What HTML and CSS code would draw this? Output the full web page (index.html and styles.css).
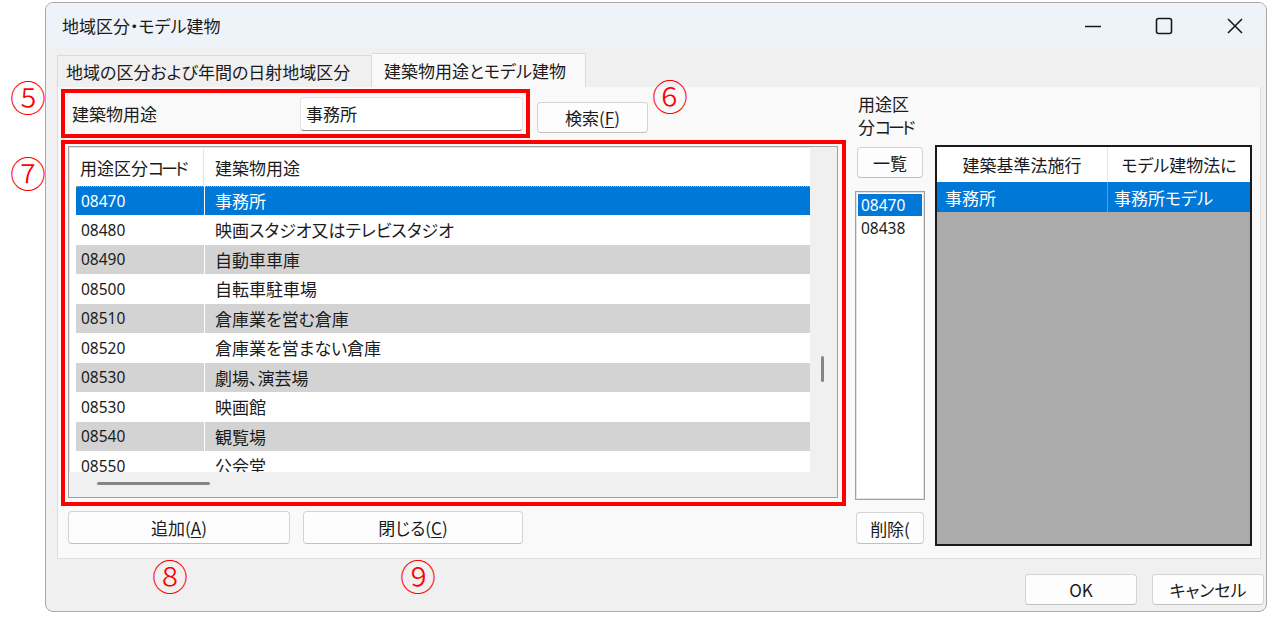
FILE: index.html
```html
<!DOCTYPE html>
<html lang="ja">
<head>
  <meta charset="UTF-8">
  <title>地域区分・モデル建物</title>
  <link rel="stylesheet" href="styles.css">
</head>
<body>
  <div class="window">
    <div class="titlebar">
      <span class="title">地域区分・モデル建物</span>
      <div class="controls">
        <span class="ctl">
          <svg width="18" height="18" viewBox="0 0 18 18"><path d="M1 9.5h16" stroke="#1a1a1a" stroke-width="1.6"/></svg>
        </span>
        <span class="ctl">
          <svg width="18" height="18" viewBox="0 0 18 18"><rect x="1.5" y="1.5" width="15" height="15" rx="2" fill="none" stroke="#1a1a1a" stroke-width="1.6"/></svg>
        </span>
        <span class="ctl">
          <svg width="18" height="18" viewBox="0 0 18 18"><path d="M2 2l14 14M16 2L2 16" stroke="#1a1a1a" stroke-width="1.6"/></svg>
        </span>
      </div>
    </div>

    <div class="tabs">
      <div class="tab">地域の区分および年間の日射地域区分</div>
      <div class="tab active">建築物用途とモデル建物</div>
    </div>

    <div class="panel">
      <div class="main">
        <div class="search-row">
          <div class="redbox box-search">
            <span class="label">建築物用途</span>
            <div class="input">事務所</div>
          </div>
          <button class="btn btn-search">検索(<u>F</u>)</button>
        </div>

        <div class="redbox box-list">
          <div class="listview">
            <div class="lv-body">
              <div class="lv-rows">
                <div class="lv-head">
                  <div class="c1">用途区分<span class="narrow">コード</span></div>
                  <div class="c2">建築物用途</div>
                </div>
                <div class="row sel"><div class="c1 code">08470</div><div class="c2">事務所</div></div>
                <div class="row"><div class="c1 code">08480</div><div class="c2">映画スタジオ又はテレビスタジオ</div></div>
                <div class="row alt"><div class="c1 code">08490</div><div class="c2">自動車車庫</div></div>
                <div class="row"><div class="c1 code">08500</div><div class="c2">自転車駐車場</div></div>
                <div class="row alt"><div class="c1 code">08510</div><div class="c2">倉庫業を営む倉庫</div></div>
                <div class="row"><div class="c1 code">08520</div><div class="c2">倉庫業を営まない倉庫</div></div>
                <div class="row alt"><div class="c1 code">08530</div><div class="c2">劇場、演芸場</div></div>
                <div class="row"><div class="c1 code">08530</div><div class="c2">映画館</div></div>
                <div class="row alt"><div class="c1 code">08540</div><div class="c2">観覧場</div></div>
                <div class="row"><div class="c1 code">08550</div><div class="c2">公会堂</div></div>
              </div>
              <div class="vscroll"><span class="vthumb"></span></div>
            </div>
            <div class="hscroll"><span class="hthumb"></span></div>
          </div>
        </div>

        <div class="btn-row">
          <button class="btn btn-wide">追加(<u>A</u>)</button>
          <button class="btn btn-wide">閉じる(<u>C</u>)</button>
        </div>
      </div>

      <div class="codes">
        <div class="codes-label">用途区<br>分<span class="narrow">コード</span></div>
        <button class="btn btn-list">一覧</button>
        <div class="listbox">
          <div class="lb-item sel">08470</div>
          <div class="lb-item">08438</div>
        </div>
        <button class="btn btn-del">削除(</button>
      </div>

      <div class="grid">
        <div class="grid-head">
          <div class="g1">建築基準法施行</div>
          <div class="g2">モデル建物法に</div>
        </div>
        <div class="grid-row">
          <div class="g1">事務所</div>
          <div class="g2">事務所モデル</div>
        </div>
      </div>
    </div>

    <div class="footer">
      <button class="btn btn-foot">OK</button>
      <button class="btn btn-foot">キャンセル</button>
    </div>
  </div>

  <span class="mark m5">⑤</span>
  <span class="mark m6">⑥</span>
  <span class="mark m7">⑦</span>
  <span class="mark m8">⑧</span>
  <span class="mark m9">⑨</span>
</body>
</html>
```

FILE: styles.css
```css
body {
  margin: 0;
  background: #fff;
  position: relative;
  font-family: "Noto Sans CJK JP", sans-serif;
  font-feature-settings: "palt";
  font-size: 17px;
  color: #1b1b1b;
}
.window {
  margin: 2px 0 0 45px;
  width: 1222px;
  height: 610px;
  box-sizing: border-box;
  border: 1px solid #a9a9a9;
  border-radius: 8px;
  background: #f0f0f0;
  overflow: hidden;
  display: flex;
  flex-direction: column;
}
.titlebar {
  height: 45px;
  flex: none;
  background: #eef2f9;
  display: flex;
  align-items: center;
}
.title {
  padding-left: 16px;
}
.controls {
  margin-left: auto;
  display: flex;
  gap: 25px;
  padding-right: 8px;
}
.ctl {
  width: 46px;
  height: 45px;
  display: flex;
  align-items: center;
  justify-content: center;
}
.tabs {
  height: 39px;
  flex: none;
  display: flex;
  align-items: flex-end;
  padding-left: 11px;
}
.tab {
  height: 32px;
  box-sizing: border-box;
  padding: 0 8px;
  display: flex;
  align-items: center;
  border: 1px solid #dadada;
  border-bottom: none;
  background: #f0f0f0;
}
.tab:first-child {
  width: 315px;
}
.tab.active {
  height: 34px;
  width: 214px;
  padding-left: 12px;
  background: #f9f9f9;
  border-left: none;
}
.panel {
  height: 472px;
  flex: none;
  margin: 0 5px 0 11px;
  box-sizing: border-box;
  border: 1px solid #dedede;
  border-top: none;
  background: #f9f9f9;
  padding: 2px 0 0 3px;
  display: flex;
}
.main {
  width: 785px;
  display: flex;
  flex-direction: column;
}
.search-row {
  display: flex;
  align-items: flex-start;
}
.redbox {
  border: 4px solid #ff0000;
  box-sizing: border-box;
}
.box-search {
  width: 469px;
  height: 49px;
  display: flex;
  align-items: center;
}
.label {
  padding-left: 7px;
}
.input {
  margin-left: auto;
  margin-right: 3px;
  width: 223px;
  height: 34px;
  box-sizing: border-box;
  padding-left: 5px;
  display: flex;
  align-items: center;
  background: #fff;
  border: 1px solid #e3e3e3;
  border-bottom: 1px solid #858585;
  border-radius: 4px;
}
.btn {
  font: inherit;
  color: #1b1b1b;
  background: #fdfdfd;
  border: 1px solid #d3d3d3;
  border-bottom-color: #c0c0c0;
  border-radius: 4px;
  padding: 0;
  box-sizing: border-box;
}
.btn u {
  text-underline-offset: 2px;
}
.btn-search {
  margin: 13px 0 0 7px;
  width: 111px;
  height: 31px;
}
.box-list {
  margin-top: 2px;
  height: 366px;
  padding: 2px 4px 4px 3px;
}
.listview {
  height: 100%;
  box-sizing: border-box;
  border: 1px solid #a0a0a0;
  box-shadow: inset 0 0 0 1px #e2e2e2;
  background: #fff;
  display: flex;
  flex-direction: column;
}
.lv-body {
  flex: 1;
  display: flex;
  overflow: hidden;
}
.lv-rows {
  flex: 1;
  padding: 2px 0 0 7px;
  overflow: hidden;
}
.lv-head,
.row {
  display: grid;
  grid-template-columns: 128px 1fr;
  column-gap: 1px;
}
.lv-head {
  height: 37px;
  align-items: center;
}
.lv-head .c1 {
  padding-left: 4px;
  border-right: 1px solid #e5e5e5;
  height: 100%;
  display: flex;
  align-items: center;
}
.lv-head .c2 {
  padding-left: 10px;
}
.narrow {
  letter-spacing: -3px;
}
.row {
  height: 28.5px;
  margin-bottom: 1px;
}
.row > div {
  display: flex;
  align-items: center;
  white-space: nowrap;
}
.row .c1 {
  padding-left: 5px;
}
.row .c2 {
  padding-left: 10px;
}
.row.alt > div {
  background: #d3d3d3;
}
.row.sel > div {
  background: #0078d7;
  color: #fff;
  border-top: 1px dotted #e3a04a;
}
.code {
  font-family: "Noto Sans", sans-serif;
  font-size: 15.5px;
}
.vscroll {
  width: 27px;
  flex: none;
  background: #f0f0f0;
  position: relative;
}
.vthumb {
  position: absolute;
  left: 11px;
  top: 209px;
  width: 3px;
  height: 26px;
  border-radius: 2px;
  background: #858585;
}
.hscroll {
  height: 25px;
  flex: none;
  background: #f0f0f0;
  position: relative;
}
.hthumb {
  position: absolute;
  left: 28px;
  top: 10px;
  width: 113px;
  height: 3px;
  border-radius: 2px;
  background: #858585;
}
.btn-row {
  display: flex;
  gap: 13px;
  margin: 5px 0 0 7px;
}
.btn-wide {
  width: 222px;
  height: 33px;
}
.btn-wide + .btn-wide {
  width: 220px;
}
.codes {
  width: 70px;
  margin-left: 9px;
  display: flex;
  flex-direction: column;
}
.codes-label {
  margin: 3px 0 0 3px;
  height: 46px;
  line-height: 23px;
  white-space: nowrap;
}
.btn-list {
  margin: 9px 0 0 2px;
  width: 66px;
  height: 31px;
}
.listbox {
  margin-top: 13px;
  height: 309px;
  box-sizing: border-box;
  border: 1px solid #a0a0a0;
  box-shadow: inset 0 0 0 1px #e2e2e2;
  background: #fff;
  padding: 2px;
}
.lb-item {
  height: 23px;
  padding-left: 3px;
  display: flex;
  align-items: center;
  font-family: "Noto Sans", sans-serif;
  font-size: 15.5px;
}
.lb-item.sel {
  height: 22px;
  background: #0078d7;
  color: #fff;
}
.btn-del {
  margin: 12px 0 0 1px;
  width: 68px;
  height: 32px;
  overflow: hidden;
  white-space: nowrap;
}
.grid {
  margin: 56px 0 0 10px;
  width: 317px;
  height: 401px;
  box-sizing: border-box;
  border: 2px solid #1a1a1a;
  background: #ababab;
}
.grid-head,
.grid-row {
  display: grid;
  grid-template-columns: 170px 1fr;
  column-gap: 1px;
}
.grid-head {
  height: 35px;
  background: #e6e6e6;
}
.grid-head > div {
  background: #fff;
  display: flex;
  align-items: center;
  justify-content: center;
  white-space: nowrap;
  overflow: hidden;
}
.grid-row {
  height: 30px;
  background: #4d9fe3;
}
.grid-row > div {
  background: #0078d7;
  color: #fff;
  display: flex;
  align-items: center;
  white-space: nowrap;
}
.grid-row .g1 {
  padding-left: 8px;
}
.grid-row .g2 {
  padding-left: 6px;
}
.footer {
  flex: 1;
  display: flex;
  justify-content: flex-end;
  align-items: flex-start;
  gap: 15px;
  padding: 15px 2px 0 0;
}
.btn-foot {
  width: 112px;
  height: 31px;
}
.mark {
  position: absolute;
  font-weight: 300;
  font-size: 36px;
  line-height: 1;
  color: #ff0000;
}
.m5 { left: 10px; top: 78px; }
.m6 { left: 652px; top: 77px; }
.m7 { left: 10px; top: 154px; }
.m8 { left: 152px; top: 557px; }
.m9 { left: 400px; top: 557px; }
```
